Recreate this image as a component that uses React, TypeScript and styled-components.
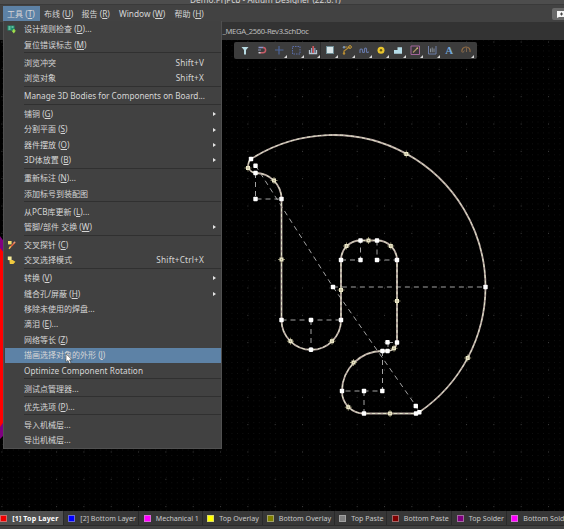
import React from "react";
import styled, { createGlobalStyle, css } from "styled-components";

const Global = createGlobalStyle`
  html, body { margin: 0; padding: 0; background: #000; overflow: hidden; }
  * { box-sizing: border-box; }
`;

const Window = styled.div`
  width: 564px;
  height: 529px;
  position: relative;
  display: flex;
  flex-direction: column;
  overflow: hidden;
  background: #000;
  color: #d6d6d6;
  font-family: "Noto Sans", "Noto Sans CJK SC", sans-serif;
  font-size: 8.2px;
  line-height: 1;
  white-space: nowrap;
`;

const TitleBar = styled.div`
  height: 5px;
  flex: none;
  display: flex;
  align-items: flex-end;
  padding-left: 190px;
  background: #4d4d4d;
  border-bottom: 1px solid #3a3a3a;
  overflow: hidden;
  font-size: 8.3px;
`;

const TitleText = styled.span`
  line-height: 10px;
  margin-bottom: -1px;
`;

const MenuBar = styled.div`
  height: 17px;
  flex: none;
  display: flex;
  align-items: center;
  background: #424242;
  padding-left: 3px;
  font-size: 8.3px;
`;

const MenuTitle = styled.div<{ $w: number; $active?: boolean }>`
  width: ${(p) => p.$w}px;
  height: 15px;
  padding: 1px 0 0 4px;
  display: flex;
  align-items: center;
  background: ${(p) => (p.$active ? "#5d82a6" : "transparent")};
`;

const NoteButton = styled.div`
  margin-left: auto;
  width: 12px;
  height: 12px;
  padding: 3px 0 0 5px;
  background: #686868;
  border-radius: 2px 0 0 2px;
  svg { display: block; }
`;

const TabBar = styled.div`
  height: 18px;
  flex: none;
  display: flex;
  align-items: center;
  padding: 1px 0 0 222.5px;
  background: #333;
  color: #bdbdbd;
  font-size: 7.6px;
  letter-spacing: -0.33px;
`;

const Canvas = styled.main`
  height: 471px;
  flex: none;
  background: #000;
  svg.board { display: block; }
`;

const ToolStrip = styled.div`
  position: absolute;
  left: 234px;
  top: 42px;
  width: 243px;
  height: 17px;
  padding-left: 2px;
  display: flex;
  background: #3c3c3c;
  border-radius: 2px;
`;

const Tool = styled.div<{ $corner?: boolean; $divider?: boolean }>`
  width: 17.05px;
  height: 17px;
  flex: none;
  position: relative;
  padding: 2px 0 0 2.5px;
  svg { display: block; }
  ${(p) => p.$divider && css`border-right: 1px solid #2c2c2c;`}
  ${(p) =>
    p.$corner &&
    css`
      &::after {
        content: "";
        position: absolute;
        right: 0.5px;
        bottom: 1px;
        border-left: 3px solid transparent;
        border-bottom: 3px solid #d8d8d8;
      }
    `}
`;

const Menu = styled.div`
  position: absolute;
  left: 3px;
  top: 21px;
  width: 219px;
  height: 428px;
  padding: 0.7px 0 0 0.5px;
  background: #414141;
  border: 1px solid #505050;
  border-top: 0;
`;

const Row = styled.div<{ $active?: boolean }>`
  height: 15.4px;
  display: flex;
  align-items: center;
  background: ${(p) => (p.$active ? "#5d82a6" : "transparent")};
`;

const IconCell = styled.div`
  width: 19.5px;
  flex: none;
  padding-left: 1.5px;
  svg { display: block; }
`;

const Shortcut = styled.div`
  margin-left: auto;
  margin-right: 17px;
  letter-spacing: 0.2px;
`;

const Arrow = styled.div`
  margin-left: auto;
  margin-right: 5px;
  border: 2.5px solid transparent;
  border-left: 3px solid #e4e4e4;
  border-right: 0;
`;

const Separator = styled.div`
  height: 2.6px;
  margin-left: 19.5px;
  border-top: 1px solid #303030;
`;

const Run = styled.span`
  white-space: pre;
`;

const Latin = styled.span<{ $ls: number }>`
  letter-spacing: ${(p) => p.$ls}px;
  u { text-decoration-thickness: 1px; text-underline-offset: 1px; }
`;

const Han = styled.span`
  font-family: "Noto Sans CJK SC", sans-serif;
  font-size: 8px;
`;

const LayerBar = styled.div`
  height: 14px;
  flex: none;
  display: flex;
  background: #343434;
  font-size: 7.1px;
  overflow: hidden;
`;

const Layer = styled.div<{ $w: number; $pad: number; $active?: boolean }>`
  width: ${(p) => p.$w}px;
  flex: none;
  display: flex;
  align-items: center;
  gap: 5.3px;
  padding-top: 1px;
  padding-left: ${(p) => p.$pad}px;
  border-right: 1px solid #292929;
  background: ${(p) => (p.$active ? "#505050" : "#373737")};
  color: ${(p) => (p.$active ? "#fff" : "#c8c8c8")};
  font-weight: ${(p) => (p.$active ? 700 : 400)};
`;

const Swatch = styled.i<{ $c: string }>`
  width: 7px;
  height: 7px;
  flex: none;
  background: ${(p) => p.$c};
  border: 1px solid rgba(190, 190, 190, 0.55);
`;

const Footer = styled.div`
  height: 4px;
  flex: none;
  background: #424242;
  border-top: 1px solid #2b2b2b;
`;

const Cursor = styled.svg`
  position: absolute;
  left: 65px;
  top: 353px;
`;

function Label({ text, ls = 0 }: { text: string; ls?: number }) {
  const runs = text.match(/[\u4e00-\u9fff]+|[^\u4e00-\u9fff]+/g) || [];
  return (
    <Run>
      {runs.map((r, i) => {
        if (/[\u4e00-\u9fff]/.test(r)) return <Han key={i}>{r}</Han>;
        const m = r.match(/^(.*\()([A-Z])(\).*)$/);
        return (
          <Latin key={i} $ls={ls}>
            {m ? (<>{m[1]}<u>{m[2]}</u>{m[3]}</>) : r}
          </Latin>
        );
      })}
    </Run>
  );
}

const RuleIcon = () => (
  <svg width="11" height="11" viewBox="0 0 11 11">
    <path d="M1.5 1.5h7v5h-7z" fill="#1f8f6e" />
    <path d="M2.5 3h2M2.5 5h2M5.5 3h2" stroke="#a8e6cf" strokeWidth="1" />
    <path d="M5.5 6.5h4.5L7.8 9.5z" fill="#9fe04c" />
    <path d="M7 5.2h1.8v2H7z" fill="#9fe04c" />
  </svg>
);
const ProbeIcon = () => (
  <svg width="11" height="11" viewBox="0 0 11 11">
    <path d="M3.5 8L9 2.2" stroke="#e0643c" strokeWidth="1.6" />
    <path d="M7.5 3.4L9.2 1.8" stroke="#ef9d7d" strokeWidth="1.2" />
    <path d="M2 1h3.6v3.4H2z" fill="#f4df6c" />
    <path d="M3 9l1.6-2.6" stroke="#f0cf55" strokeWidth="1.2" />
  </svg>
);
const SelectIcon = () => (
  <svg width="11" height="11" viewBox="0 0 11 11">
    <path d="M1.8 1.5h3.8v3.6H1.8z" fill="#f7ec9a" />
    <path d="M3.4 5h3.2l2.8 1.8L7.4 9H3.8z" fill="#f0c93e" />
  </svg>
);

type Item = { t: string; key?: string; sub?: boolean; icon?: React.ReactNode; on?: boolean; ls?: number };
const groups: Item[][] = [
  [{ t: "设计规则检查 (D)...", icon: <RuleIcon /> }, { t: "复位错误标志 (M)" }],
  [{ t: "浏览冲突", key: "Shift+V" }, { t: "浏览对象", key: "Shift+X" }],
  [{ t: "Manage 3D Bodies for Components on Board..." }],
  [
    { t: "铺铜 (G)", sub: true },
    { t: "分割平面 (S)", sub: true },
    { t: "器件摆放 (O)", sub: true },
    { t: "3D体放置 (B)", sub: true },
  ],
  [{ t: "重新标注 (N)..." }, { t: "添加标号到装配图" }],
  [{ t: "从PCB库更新 (L)..." }, { t: "管脚/部件 交换 (W)", sub: true }],
  [{ t: "交叉探针 (C)", icon: <ProbeIcon /> }, { t: "交叉选择模式", key: "Shift+Ctrl+X", icon: <SelectIcon /> }],
  [
    { t: "转换 (V)", sub: true },
    { t: "缝合孔/屏蔽 (H)", sub: true },
    { t: "移除未使用的焊盘..." },
    { t: "滴泪 (E)..." },
    { t: "网络等长 (Z)" },
    { t: "描画选择对象的外形 (J)", on: true },
    { t: "Optimize Component Rotation", ls: 0.07 },
  ],
  [{ t: "测试点管理器..." }],
  [{ t: "优先选项 (P)..." }],
  [{ t: "导入机械层..." }, { t: "导出机械层..." }],
];

const tools: { art: React.ReactNode; corner?: boolean; divider?: boolean }[] = [
  { art: <path d="M2.5 3h7L7 6v4.5H5V6z" fill="#b9dce4" /> },
  {
    art: (
      <>
        <path d="M2.5 3.5h4.8" stroke="#8d96c8" strokeWidth="1.5" />
        <path d="M7 3.5a2.6 2.6 0 010 5.2H3.5" stroke="#c75c68" strokeWidth="1.5" fill="none" />
        <path d="M2.5 8.7h2" stroke="#c9ced6" strokeWidth="1.5" />
        <path d="M2 6h3" stroke="#8791b4" />
      </>
    ),
  },
  { art: <path d="M6 2v8.5M2 6h8.5" stroke="#4d669c" strokeWidth="1.2" />, corner: true },
  { art: <path d="M2.5 2.5h7.5v7.5H2.5z" stroke="#5a6da8" strokeDasharray="1.5 1" fill="none" />, corner: true },
  {
    art: (
      <>
        <path d="M2.5 6v3.5h7V6" stroke="#b9c4cf" strokeWidth="1.3" fill="none" />
        <path d="M4.5 4v5M7.8 4v5" stroke="#8baed0" strokeWidth="1.1" />
        <path d="M6.2 2v7" stroke="#d1575b" strokeWidth="1.7" />
      </>
    ),
    divider: true,
    corner: true,
  },
  {
    art: (
      <>
        <path d="M2 2h8v8H2z" fill="#6f8d95" />
        <path d="M3 3h6v6H3z" fill="#d9e6e9" />
      </>
    ),
    corner: true,
  },
  {
    art: (
      <>
        <path d="M3 10V7l5.5-4M3 3h3.5" stroke="#b88d33" strokeWidth="1.2" fill="none" />
        <circle cx="3" cy="3.3" r="1.2" fill="#7993b5" />
        <circle cx="9" cy="3" r="1.4" fill="none" stroke="#c79b37" />
        <circle cx="3" cy="9.5" r="1.2" fill="#b88d33" />
      </>
    ),
    corner: true,
  },
  { art: <path d="M2 9V6a1.3 1.3 0 012.5 0v1.5a1 1 0 002 0V5a1 1 0 012 0v2.5a1 1 0 002 0" stroke="#6779aa" strokeWidth="1.1" fill="none" />, corner: true },
  {
    art: (
      <>
        <circle cx="6" cy="6.2" r="3.5" fill="#e9c52e" />
        <circle cx="6" cy="6.2" r="1.2" fill="#665914" />
      </>
    ),
    corner: true,
  },
  { art: <path d="M2 6h3.5V3.2H10V9.7H2z" fill="#b5dce8" />, corner: true },
  {
    art: (
      <>
        <path d="M2 2h8.5v8.5H2z" fill="#3a3638" stroke="#a2669a" />
        <path d="M4 8.5l4-4" stroke="#b19b68" strokeWidth="1.1" />
        <circle cx="8.3" cy="4.2" r=".9" fill="#c9b377" />
      </>
    ),
    corner: true,
  },
  {
    art: (
      <>
        <path d="M2.5 2v8H10V2" stroke="#6d7fa9" fill="none" />
        <path d="M4.5 4.5v3.8M6.2 3.5v4.8M8 4.5v3.8" stroke="#8f98a4" strokeWidth=".9" />
      </>
    ),
    corner: true,
  },
  {
    art: <text x="6.2" y="10" fontSize="11" fontWeight="700" textAnchor="middle" fontFamily="Liberation Serif, serif" fill="#75a8d8">A</text>,
  },
  {
    art: (
      <>
        <path d="M2 8A4 4 0 016 3a4 4 0 014 5" stroke="#936c43" strokeWidth="1.2" fill="none" />
        <path d="M6.5 3.5V8M4.5 6.5l-2 2.5" stroke="#7c654f" />
      </>
    ),
    corner: true,
  },
];

const layers = [
  { t: "[1] Top Layer", c: "#f00000", w: 63.5, pad: 0, on: true, ls: 0.12 },
  { t: "[2] Bottom Layer", c: "#0000ff", w: 75.5, pad: 4.5, ls: 0 },
  { t: "Mechanical 1", c: "#ff00ff", w: 63.5, pad: 4.5, ls: -0.05 },
  { t: "Top Overlay", c: "#ffff00", w: 60.5, pad: 4.5, ls: 0 },
  { t: "Bottom Overlay", c: "#808000", w: 71.5, pad: 3.5, ls: 0 },
  { t: "Top Paste", c: "#808080", w: 52.5, pad: 4.5, ls: 0 },
  { t: "Bottom Paste", c: "#800000", w: 65, pad: 4.5, ls: 0 },
  { t: "Top Solder", c: "#800080", w: 55, pad: 4.5, ls: 0 },
  { t: "Bottom Solder", c: "#ff00ff", w: 70, pad: 4, ls: 0 },
];

const outline =
  "M251 159A152.4 152.4 0 0 1 485.5 287A152.4 152.4 0 0 1 419.5 412L416 413.5H364A22 22 0 0 1 342 391A40.5 40.5 0 0 1 382.5 351H387A9.5 9.5 0 0 0 397 342V260A19.8 19.8 0 0 0 377 240.5H360.5A19.5 19.5 0 0 0 341 260V320A29.7 29.7 0 0 1 281.5 320V199A26 26 0 0 0 255.5 173A8 8 0 0 1 251 159";
const guides =
  "M255.5 173V199H281.5M255.5 165.5L333 287H485.5M333 287L416 406L419 412M281.5 320H341M311 320V349.5M341 260H360.5V240.5M377 240.5V260H397M388 342.5H397M388 342V351M382.5 351V391H342M364 391V413.5";
const corners = [
  [251, 159], [255.5, 165.8], [255.5, 173], [255.5, 199], [281.5, 199], [333, 287], [485.5, 287], [281.5, 320], [311, 320], [341, 320],
  [311, 349.7], [341, 260], [360.5, 240.5], [377, 240.5], [360.5, 260], [377, 260], [397, 260], [387.5, 342.3], [397, 342.5],
  [382.5, 351], [387.5, 351], [342, 391], [364, 391], [382.3, 391], [364, 413.5], [415.8, 406], [416, 413.5], [419.3, 412.3],
];
const mids = [
  [248, 168], [274, 180.5], [281.5, 259.5], [290.5, 341.2], [332, 341.2], [341, 290], [346.5, 246], [368.5, 240.5], [390.8, 246],
  [397, 301], [394, 348.3], [353.5, 362.5], [348.3, 407.2], [390, 413.5], [406.3, 154], [467.7, 358],
];

function Board() {
  return (
    <svg className="board" width="564" height="471" viewBox="0 40 564 471">
      <defs>
        <pattern id="minor" x="1.9" y="1.3" width="5.466" height="5.466" patternUnits="userSpaceOnUse">
          <rect width="0.9" height="0.9" fill="#131313" />
        </pattern>
        <pattern id="major" x="1.4" y="14.2" width="27.33" height="27.33" patternUnits="userSpaceOnUse">
          <rect width="1" height="1" fill="#404040" />
        </pattern>
      </defs>
      <rect y="40" width="564" height="471" fill="url(#minor)" />
      <rect y="40" width="564" height="471" fill="url(#major)" />
      <path d="M0 236L5 243V434L0 439Z" fill="#800080" />
      <path d="M0 248L5 254V420L0 427Z" fill="#f00" />
      <path d={guides} stroke="#a2a2a2" strokeWidth="1" strokeDasharray="5 4" fill="none" />
      <path d={outline} stroke="#b9a9a3" strokeWidth="1.8" fill="none" />
      <path d={outline} stroke="#dfe3c8" strokeWidth="1" strokeDasharray="3 2.5" fill="none" />
      {mids.map(([x, y], i) => (
        <g key={i}>
          <path d={`M${x - 3.5} ${y}h7M${x} ${y - 3.5}v7`} stroke="#aaa57f" strokeWidth=".8" />
          <rect x={x - 2} y={y - 2} width="4" height="4" fill="#eae6c6" />
          <rect x={x - 0.6} y={y - 0.6} width="1.2" height="1.2" fill="#a69c88" />
        </g>
      ))}
      {corners.map(([x, y], i) => (
        <rect key={i} x={x - 2.2} y={y - 2.2} width="4.4" height="4.4" rx=".8" fill="#fff" />
      ))}
    </svg>
  );
}

export default function App() {
  return (
    <Window>
      <Global />
      <TitleBar>
        <TitleText>Demo.PrjPcb - Altium Designer (22.8.1)</TitleText>
      </TitleBar>
      <MenuBar>
        <MenuTitle $w={37} $active><Label text="工具 (T)" /></MenuTitle>
        <MenuTitle $w={37.5}><Label text="布线 (U)" /></MenuTitle>
        <MenuTitle $w={37.5}><Label text="报告 (R)" /></MenuTitle>
        <MenuTitle $w={55.5}><Label text="Window (W)" /></MenuTitle>
        <MenuTitle $w={40}><Label text="帮助 (H)" /></MenuTitle>
        <NoteButton>
          <svg width="7" height="7" viewBox="0 0 7 7">
            <path d="M0 0h7v6H2L0 7z" fill="#f5f5f5" />
            <path d="M4.5 1.5v3M3 3h3" stroke="#444" />
          </svg>
        </NoteButton>
      </MenuBar>
      <TabBar>_MEGA_2560-Rev3.SchDoc</TabBar>
      <Canvas><Board /></Canvas>
      <LayerBar>
        {layers.map((l, i) => (
          <Layer key={i} $w={l.w} $pad={l.pad} $active={l.on}>
            <Swatch $c={l.c} />
            <Latin $ls={l.ls}>{l.t}</Latin>
          </Layer>
        ))}
      </LayerBar>
      <Footer />
      <ToolStrip>
        {tools.map((t, i) => (
          <Tool key={i} $corner={t.corner} $divider={t.divider}>
            <svg width="12" height="12" viewBox="0 0 12 12">{t.art}</svg>
          </Tool>
        ))}
      </ToolStrip>
      <Menu>
        {groups.map((g, gi) => (
          <React.Fragment key={gi}>
            {gi > 0 && <Separator />}
            {g.map((it) => (
              <Row key={it.t} $active={it.on}>
                <IconCell>{it.icon}</IconCell>
                <Label text={it.t} ls={it.ls} />
                {it.key && <Shortcut>{it.key}</Shortcut>}
                {it.sub && <Arrow />}
              </Row>
            ))}
          </React.Fragment>
        ))}
      </Menu>
      <Cursor width="8" height="12" viewBox="0 0 8 12">
        <path d="M1 .8v8.4l2-1.8 1.4 3.2 1.6-.7-1.4-3h2.6z" fill="#fff" stroke="#333" strokeWidth=".6" />
      </Cursor>
    </Window>
  );
}
